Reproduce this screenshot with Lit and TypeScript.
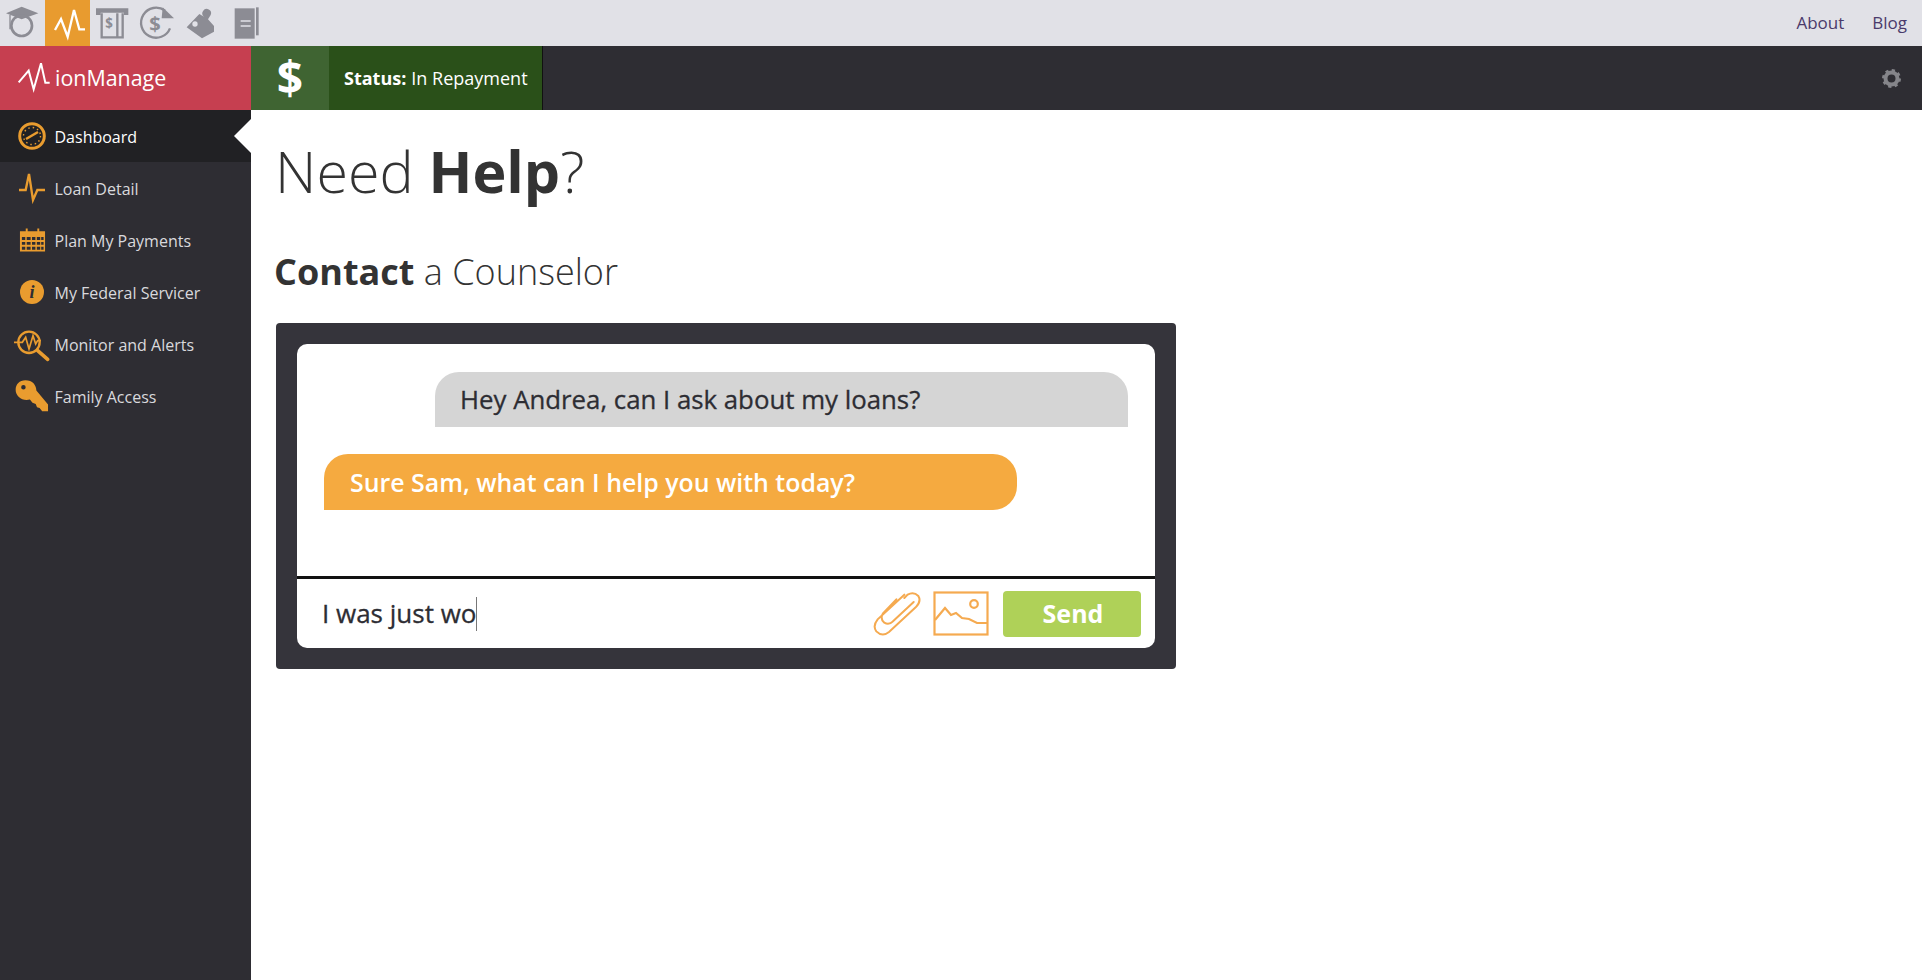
import { LitElement, html, css, svg } from "lit";
import { customElement } from "lit/decorators.js";

@customElement("app-root")
export class AppRoot extends LitElement {
  static styles = css`
    :host { display: block; width: 1922px; height: 980px; overflow: hidden; background: #fff; font-family: "Open Sans", sans-serif; color: #333; }
    svg { display: block; }
    .top { height: 46px; background: #e1e1e7; display: flex; align-items: stretch; }
    .tool { width: 45px; display: flex; align-items: center; justify-content: center; }
    .tool.on { background: #e89b2f; }
    .links { margin-left: auto; display: flex; gap: 28px; padding: 0 15px 2px 0; align-items: center; font-size: 17px; color: #4a3a6b; }
    .head { height: 64px; background: #2e2d33; display: flex; }
    .logo { width: 251px; background: #c63f50; color: #fff; display: flex; align-items: center; padding: 0 0 1px 17px; box-sizing: border-box; gap: 4px; font-size: 21.4px; }
    .dollar { width: 78px; background: #3f6432; color: #fff; font: 700 46px "Open Sans", sans-serif; display: flex; align-items: center; justify-content: center; padding-bottom: 2px; box-sizing: border-box; }
    .status { width: 214px; background: #2a5019; color: #fff; border-right: 1px solid #111; display: flex; align-items: center; padding-left: 15px; box-sizing: border-box; font-size: 18px; white-space: nowrap; }
    .status b { margin-right: 5px; }
    .gear { margin-left: auto; padding-right: 21px; display: flex; align-items: center; }
    .body { display: flex; height: 870px; }
    .side { width: 251px; background: #2e2d33; flex: none; }
    .item { height: 52px; display: flex; align-items: center; color: #d9d9dd; font-size: 16px; position: relative; }
    .item span { padding-top: 2px; }
    .item.on { background: #212124; color: #fff; }
    .item.on::after { content: ""; position: absolute; right: 0; top: 9px; border: 17px solid transparent; border-right-color: #fff; border-left-width: 0; }
    .ico { width: 44.500px; padding-left: 10px; display: flex; justify-content: center; flex: none; }
    .main { flex: 1; padding: 0 25px; }
    h1 { margin: 16px 0 0 -1px; font-size: 57.400px; font-weight: 300; line-height: 90px; color: #333; }
    h1 b, h2 b { font-weight: 700; }
    h2 { margin: 31px 0 0 -2px; font-size: 36px; font-weight: 300; line-height: 50px; color: #333; }
    .chat { margin: 26px 0 0; width: 900px; height: 346px; box-sizing: border-box; background: #35343b; border-radius: 4px; padding: 21px; }
    .inner { background: #fff; height: 304px; border-radius: 10px; display: flex; flex-direction: column; }
    .msgs { height: 235px; box-sizing: border-box; border-bottom: 3px solid #111; padding-top: 28px; display: flex; flex-direction: column; gap: 27px; }
    .msg { width: 693px; display: flex; align-items: center; box-sizing: border-box; }
    .a { height: 55px; margin-left: 138px; background: #d5d5d5; color: #2d2d33; padding: 0 0 2px 25px; border-radius: 24px 24px 0 0; font-size: 25.800px; -webkit-text-stroke: 0.3px #2d2d33; }
    .b { height: 56px; margin-left: 27px; background: #f5aa40; color: #fff; padding-left: 26px; border-radius: 24px 24px 24px 0; font-size: 24.900px; font-weight: 600; }
    .input { flex: 1; display: flex; align-items: center; padding: 0 14px 0 25px; font-size: 26px; color: #2d2d33; }
    .input > span { margin-top: -2px; -webkit-text-stroke: 0.3px #2d2d33; }
    .caret { width: 1px; height: 34px; background: #777; }
    .tools { margin-left: auto; display: flex; align-items: center; }
    .clip { margin-right: 5px; }
    .pic { margin-left: 6px; }
    .send { width: 138px; height: 46px; margin-left: 14px; padding: 0 0 2px 2px; box-sizing: border-box; background: #afd158; color: #fff; border-radius: 4px; font-weight: 700; font-size: 25px; display: flex; align-items: center; justify-content: center; }
  `;

  private navIcon(i: number) {
    const o = "#e99c2f";
    const icons = [
      svg`<svg width="28" height="28" viewBox="0 0 28 28" fill="none" stroke="${o}"><circle cx="14" cy="14" r="12.300" stroke-width="3"/><circle cx="14" cy="14" r="8.500" stroke-width="1.400" stroke-dasharray="1.500 3"/><path d="M8 17L20 10" stroke-width="2.600"/></svg>`,
      svg`<svg width="28" height="32" viewBox="57 186 84 96" fill="none" stroke="${o}" stroke-width="7"><path d="M60 240H80L90 192L102 270L115 240H138"/></svg>`,
      svg`<svg width="27" height="24" viewBox="0 0 28 24" fill="${o}"><path fill-rule="evenodd" d="M1 3H7V0H9V3H19V0H21V3H27V24H1ZM3 9V12H6.500V9ZM8 9V12H12V9ZM13.500 9V12H17V9ZM18.500 9V12H22V9ZM23 9V12H25.500V9ZM3 14V17H6.500V14ZM8 14V17H12V14ZM13.500 14V17H17V14ZM18.500 14V17H22V14ZM23 14V17H25.500V14ZM3 19V22H6.500V19ZM8 19V22H12V19ZM13.500 19V22H17V19ZM18.500 19V22H22V19ZM23 19V22H25.500V19Z"/></svg>`,
      svg`<svg width="24" height="24" viewBox="0 0 24 24"><circle cx="12" cy="12" r="12" fill="${o}"/><text x="12" y="18" text-anchor="middle" font-family="Liberation Serif" font-style="italic" font-weight="700" font-size="18" fill="#2e2d33">i</text></svg>`,
      svg`<svg width="38" height="36" viewBox="44 196 114 108" fill="none" stroke="${o}"><circle cx="92" cy="245" r="32" stroke-width="7"/><path d="M47 245H72L82 230L92 265L104 225L112 250L118 240H128" stroke-width="5"/><path d="M118 270L148 296" stroke-width="11" stroke-linecap="round"/></svg>`,
      svg`<svg width="34" height="34" viewBox="46 358 105 102" fill="${o}"><path fill-rule="evenodd" d="M78 360C100 360 112 375 112 392L148 435V456H130L122 446L114 444L110 434L100 430L92 420C70 426 48 412 48 390C48 372 60 360 78 360ZM72 375A7 7 0 1 0 72 389A7 7 0 1 0 72 375Z"/></svg>`,
    ];
    return icons[i];
  }

  private toolIcon(i: number) {
    const g = "#8c8c94";
    const bg = "#e1e1e7";
    const icons = [
      svg`<svg width="45" height="46" viewBox="0 0 135 138" fill="none" stroke="${g}"><path d="M18 40L65 20L115 40L65 58Z" fill="${g}" stroke="none"/><circle cx="65" cy="77" r="31" stroke-width="8"/><path d="M30 45V88" stroke-width="4"/></svg>`,
      svg`<svg width="45" height="46" viewBox="135 0 135 138" fill="none" stroke="#fff" stroke-width="7"><path d="M165 90L183 57L203 110L222 30L238 88H255"/></svg>`,
      svg`<svg width="45" height="46" viewBox="270 0 135 138" fill="none" stroke="${g}"><path d="M288 25H385V45H372V38H302V45H288Z" fill="${g}" stroke="none"/><path d="M305 40V112H368V40M352 40V112" stroke-width="7"/><text x="327" y="85" text-anchor="middle" font-family="Open Sans" font-weight="700" font-size="40" fill="${g}" stroke="none">$</text></svg>`,
      svg`<svg width="45" height="46" viewBox="405 0 135 138" fill="none" stroke="${g}" stroke-width="7"><path d="M510 85A45 45 0 1 1 495 32"/><path d="M488 22L522 55L485 55Z" fill="${g}" stroke="none"/><text x="465" y="92" text-anchor="middle" font-family="Open Sans" font-weight="700" font-size="60" fill="${g}" stroke="none">$</text></svg>`,
      svg`<svg width="45" height="46" viewBox="540 0 135 138" fill="${g}"><path d="M560 82L598 42L612 50A13 13 0 1 1 632 45L624 58L642 78V95L606 115Z"/><circle cx="585" cy="72" r="8" fill="${bg}"/></svg>`,
      svg`<svg width="45" height="46" viewBox="675 0 135 138"><path d="M704 25H764V116H704Z" fill="${g}"/><path d="M768 22H776V106H768Z" fill="${g}"/><path d="M722 63H752M722 78H752" stroke="${bg}" stroke-width="5"/></svg>`,
    ];
    return icons[i];
  }

  render() {
    const nav = ["Dashboard", "Loan Detail", "Plan My Payments", "My Federal Servicer", "Monitor and Alerts", "Family Access"];
    return html`
      <div class="top">
        ${[0, 1, 2, 3, 4, 5].map((i) => html`<div class="tool ${i === 1 ? "on" : ""}">${this.toolIcon(i)}</div>`)}
        <div class="links"><span>About</span><span>Blog</span></div>
      </div>
      <div class="head">
        <div class="logo">
          <svg width="34" height="36" viewBox="50 190 102 108" fill="none" stroke="#fff" stroke-width="6"><path d="M55 257L85 222L100 278L122 200L135 258H148"/></svg>
          <span>ionManage</span>
        </div>
        <div class="dollar">$</div>
        <div class="status"><b>Status:</b> In Repayment</div>
        <div class="gear">
          <svg width="19" height="19" viewBox="0 0 19 19"><circle cx="9.500" cy="9.500" r="6" fill="none" stroke="#85858a" stroke-width="4"/><circle cx="9.500" cy="9.500" r="8.300" fill="none" stroke="#85858a" stroke-width="2.400" stroke-dasharray="3.200 3.320"/></svg>
        </div>
      </div>
      <div class="body">
        <div class="side">
          ${nav.map((n, i) => html`<div class="item ${i === 0 ? "on" : ""}"><div class="ico">${this.navIcon(i)}</div><span>${n}</span></div>`)}
        </div>
        <div class="main">
          <h1>Need <b>Help</b>?</h1>
          <h2><b>Contact</b> a Counselor</h2>
          <div class="chat">
            <div class="inner">
              <div class="msgs">
                <div class="msg a">Hey Andrea, can I ask about my loans?</div>
                <div class="msg b">Sure Sam, what can I help you with today?</div>
              </div>
              <div class="input">
                <span>I was just wo</span><div class="caret"></div>
                <div class="tools">
                  <svg class="clip" width="50" height="48" viewBox="95 90 150 144" fill="none" stroke="#f5aa50" stroke-width="6" stroke-linecap="round"><path d="M168 118L128 160Q118 176 132 188Q146 196 158 184L220 126M192 104L112 178Q96 198 108 214Q126 232 146 216L226 142Q244 124 234 108Q220 94 202 104L192 114"/></svg>
                  <svg class="pic" width="56" height="45" viewBox="0 0 56 45" fill="none" stroke="#f5aa50" stroke-width="2.200"><rect x="1.500" y="1.500" width="53" height="42"/><circle cx="41" cy="13" r="3.800"/><path d="M2 29L12 17L18 24L23 22L29 27L36 28L44 32H54"/></svg>
                  <div class="send">Send</div>
                </div>
              </div>
            </div>
          </div>
        </div>
      </div>
    `;
  }
}
